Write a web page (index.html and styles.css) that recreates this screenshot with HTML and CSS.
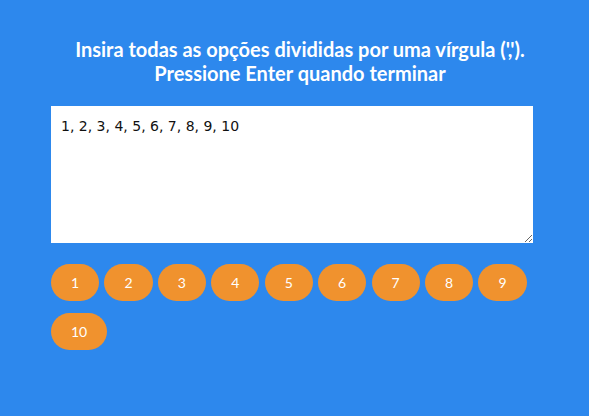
FILE: index.html
```html
<!DOCTYPE html>
<html lang="pt">
<head>
<meta charset="utf-8">
<link rel="stylesheet" href="styles.css">
</head>
<body>
<div class="wrap">
  <h3 class="title">Insira todas as opções divididas por uma vírgula (',').<br>Pressione Enter quando terminar</h3>
  <textarea class="input">1, 2, 3, 4, 5, 6, 7, 8, 9, 10</textarea>
  <div class="chips">
    <span class="chip">1</span>
    <span class="chip">2</span>
    <span class="chip">3</span>
    <span class="chip">4</span>
    <span class="chip">5</span>
    <span class="chip">6</span>
    <span class="chip">7</span>
    <span class="chip">8</span>
    <span class="chip">9</span>
    <span class="chip">10</span>
  </div>
</div>
</body>
</html>
```
FILE: styles.css
```css
html, body {
  margin: 0;
  height: 100%;
  background: #2d88ed;
}
body {
  font-family: Lato, "Noto Sans", sans-serif;
}
.wrap {
  width: 482px;
  padding: 37px 0 0 51px;
}
.title {
  margin: 0 0 21px;
  padding-left: 16px;
  color: #fff;
  font-size: 20px;
  line-height: 24px;
  font-weight: 700;
  text-align: center;
}
.input {
  display: block;
  box-sizing: border-box;
  width: 482px;
  height: 137px;
  margin: 0;
  padding: 12px 10px;
  border: none;
  background: #fff;
  font-family: "DejaVu Sans", sans-serif;
  font-size: 14px;
  line-height: 17px;
  color: #111;
  resize: vertical;
  outline: none;
}
.chips {
  display: flex;
  flex-wrap: wrap;
  column-gap: 5.3px;
  row-gap: 12px;
  margin-top: 21px;
}
.chip {
  box-sizing: border-box;
  height: 37px;
  padding: 0 20px;
  border-radius: 19px;
  background: #f0922e;
  color: #fff;
  font-size: 14px;
  line-height: 37px;
  text-align: center;
}
```
